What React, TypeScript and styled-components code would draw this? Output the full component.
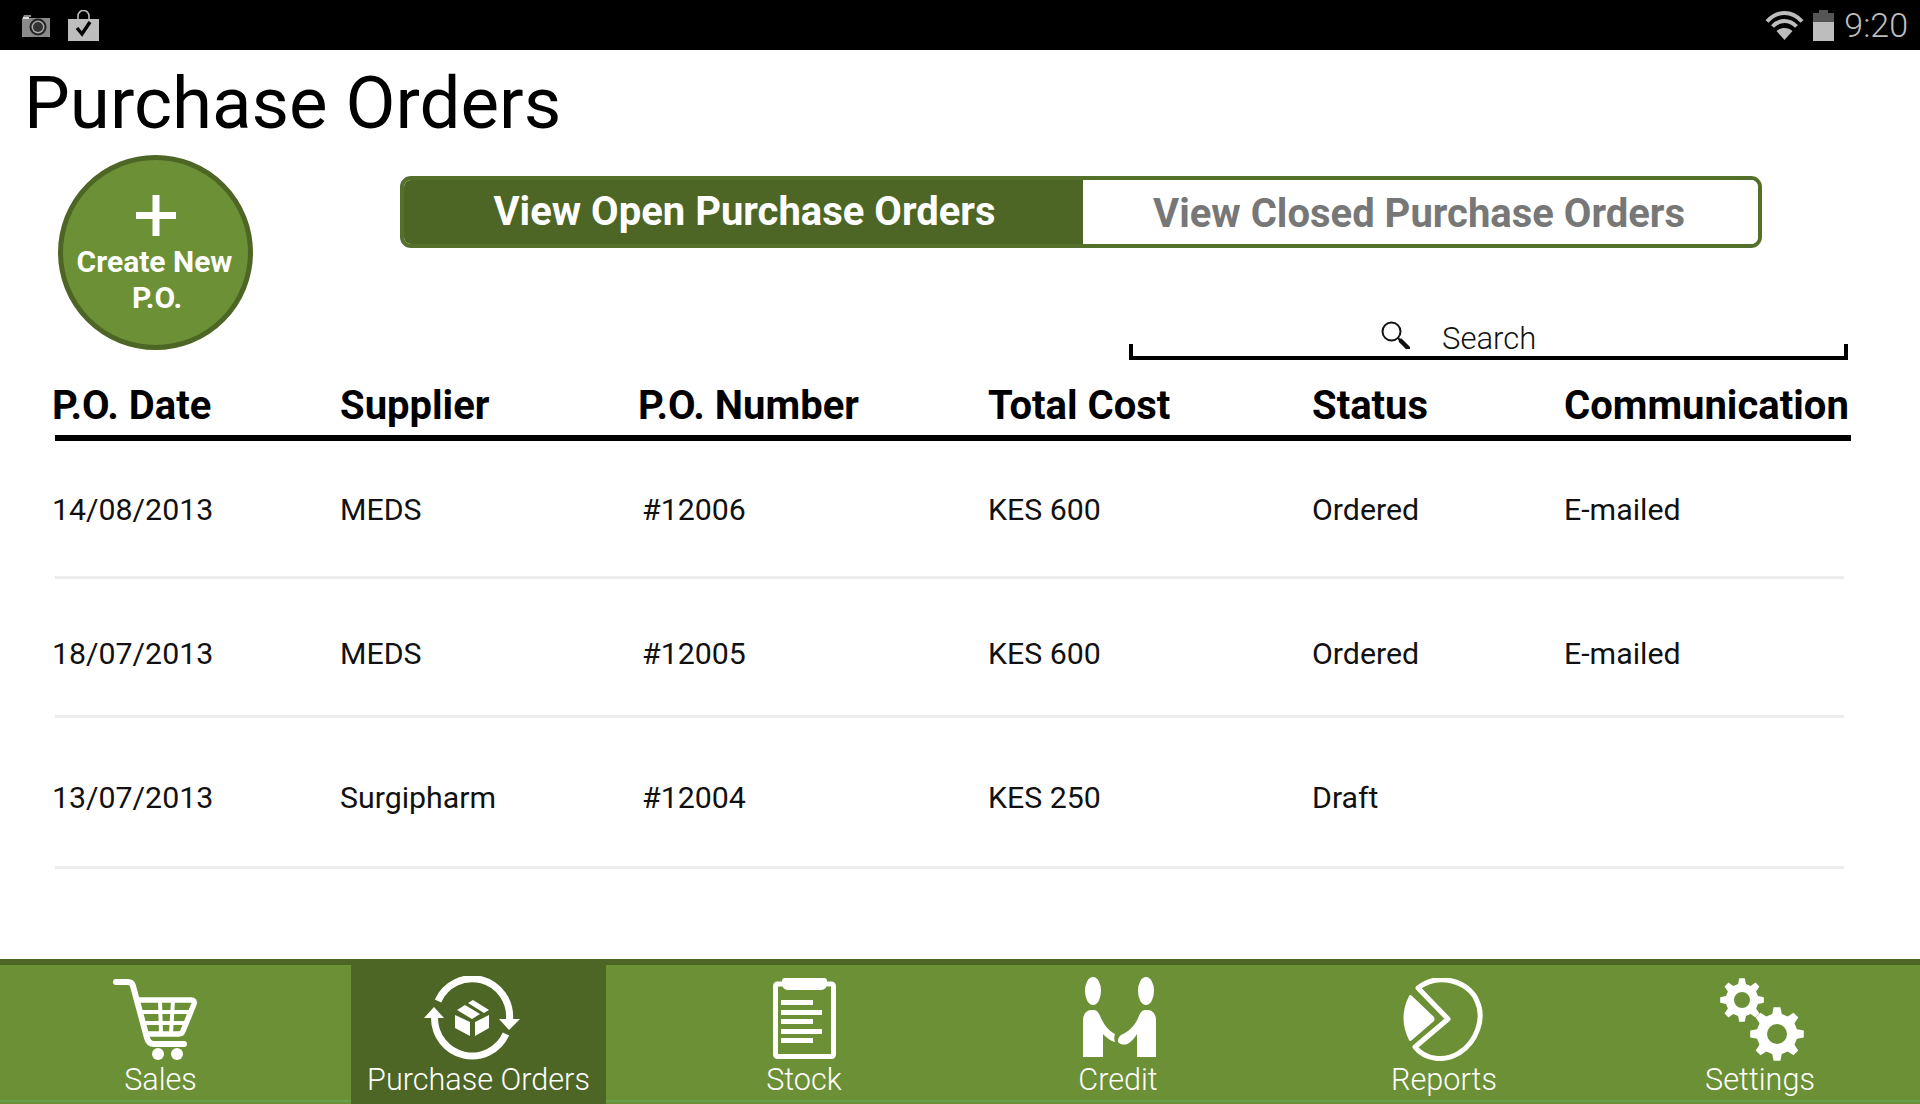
import React from 'react'
import styled, { createGlobalStyle } from 'styled-components'

const GREEN = '#6c9035'
const DARK_GREEN = '#4d6625'

const GlobalStyle = createGlobalStyle`
  html, body {
    margin: 0;
    padding: 0;
    background: #fff;
    font-family: Roboto, 'Liberation Sans', sans-serif;
  }
  * {
    box-sizing: border-box;
  }
`

const Page = styled.div`
  display: flex;
  flex-direction: column;
  width: 1920px;
  height: 1104px;
  overflow: hidden;
  background: #fff;
`

// Android status bar
const StatusBar = styled.div`
  display: flex;
  align-items: center;
  justify-content: space-between;
  flex: none;
  height: 50px;
  padding: 0 12px 0 21px;
  background: #000;
`

const StatusGroup = styled.div`
  display: flex;
  align-items: center;
  gap: ${props => props.$gap}px;
`

const Clock = styled.span`
  color: #bdbdbd;
  font-size: 34px;
  font-weight: 300;
  line-height: 34px;
  margin-left: 1px;
`

const Main = styled.main`
  flex: 1;
  min-height: 0;
`

const Title = styled.h1`
  height: 105px;
  margin: 0;
  padding-left: 24px;
  color: #000;
  font-size: 72.700px;
  font-weight: 400;
  line-height: 107px;
`

const Toolbar = styled.div`
  display: flex;
  height: 205px;
  padding: 0 72px 0 58px;
`

// Round "Create New P.O." button
const CreateButton = styled.button`
  display: flex;
  flex-direction: column;
  align-items: center;
  flex: none;
  width: 195px;
  height: 195px;
  padding: 35px 2px 0 0;
  border: 5px solid ${DARK_GREEN};
  border-radius: 50%;
  background: ${GREEN};
  color: #fff;
  font-family: inherit;
  font-size: 30px;
  font-weight: 700;
  line-height: 36px;
`

const Plus = styled.svg`
  display: block;
  margin: 0 0 8px 2px;
`

const CreateSubLabel = styled.span`
  margin-left: 5px;
`

const ToolbarRight = styled.div`
  display: flex;
  flex-direction: column;
  justify-content: space-between;
  flex: 1;
  margin-left: 147px;
  padding-top: 21px;
`

const Tabs = styled.div`
  display: flex;
  width: 1362px;
  height: 72px;
  border: 4px solid #54702a;
  border-radius: 11px;
  overflow: hidden;
`

const Tab = styled.div`
  display: flex;
  align-items: center;
  justify-content: center;
  width: ${props => (props.$active ? 679 : 675)}px;
  padding: ${props => (props.$active ? '0 0 2px 2px' : '2px 3px 0 0')};
  background: ${props => (props.$active ? DARK_GREEN : '#fff')};
  color: ${props => (props.$active ? '#fff' : '#777')};
  font-size: 40px;
  font-weight: 700;
`

const SearchBar = styled.div`
  position: relative;
  display: flex;
  align-items: flex-start;
  gap: 32px;
  width: 719px;
  height: 39px;
  margin-left: 729px;
  padding-left: 252px;
  border-bottom: 4px solid #000;
  color: #111;
  font-size: 31px;
  font-weight: 300;
  line-height: 30px;

  &::before,
  &::after {
    content: '';
    position: absolute;
    bottom: 0;
    width: 4px;
    height: 12px;
    background: #000;
  }
  &::before {
    left: 0;
  }
  &::after {
    right: 0;
  }
`

const SearchLabel = styled.span`
  margin-top: 3px;
`

const Table = styled.div`
  padding: 0 69px 0 55px;
`

const gridColumns = '288px 298px 350px 324px 252px 1fr'

const HeadRow = styled.div`
  display: grid;
  grid-template-columns: ${gridColumns};
  height: 81px;
  padding-top: 27px;
  border-bottom: 6px solid #000;
  color: #000;
  font-size: 40px;
  font-weight: 700;
  line-height: 38px;
`

const Row = styled.div`
  display: grid;
  grid-template-columns: ${gridColumns};
  align-items: start;
  height: ${props => props.$height}px;
  margin-right: 7px;
  padding-top: ${props => props.$pad}px;
  border-bottom: 3px solid #ececec;
  color: #111;
  font-size: 30.300px;
  font-weight: 400;
  line-height: 30px;
`

const Cell = styled.div`
  margin-left: -3px;
  white-space: nowrap;
`

const NumberCell = styled(Cell)`
  padding-left: 4px;
`

// Bottom navigation
const Nav = styled.nav`
  display: grid;
  grid-template-columns: 351px 255px 396px 232px 420px 266px;
  flex: none;
  height: 145px;
  background: ${DARK_GREEN};
`

const NavItem = styled.div`
  display: flex;
  flex-direction: column;
  align-items: center;
  height: ${props => (props.$active ? 145 : 139)}px;
  margin-top: ${props => (props.$active ? 0 : 6)}px;
  padding: ${props => (props.$active ? 17 : 11)}px ${props => props.$right}px 0 0;
  background: ${props => (props.$active ? DARK_GREEN : GREEN)};
  box-shadow: ${props => (props.$active ? 'none' : `inset 0 -2px ${GREEN}, inset 0 -4px #66a04a`)};
  color: #fff;
  font-size: 30.600px;
  font-weight: 300;
`

const IconSlot = styled.div`
  flex: none;
  height: 84px;
`

const NavIcon = styled.svg`
  display: block;
  margin-top: ${props => props.$top || 0}px;
  margin-left: ${props => props.$shift || 0}px;
`

const NavLabel = styled.span`
  line-height: 30px;
  margin-top: 5px;
  white-space: nowrap;
`

const CameraIcon = () => (
  <svg width='30' height='23' viewBox='0 0 30 23'>
    <path d='M2 3h8V1h-7zM1 4h28v19H1z' fill='#8a8a8a' />
    <rect x='2' y='3' width='6' height='2' fill='#ddd' />
    <circle cx='17' cy='13' r='8.5' fill='#222' />
    <circle cx='17' cy='13' r='6.5' fill='#aaa' />
    <circle cx='17' cy='13' r='5' fill='#333' />
  </svg>
)

const BagIcon = () => (
  <svg width='31' height='31' viewBox='0 0 31 31'>
    <path d='M10 9V6a5.5 5.5 0 0 1 11 0v3' fill='none' stroke='#bbb' strokeWidth='1.6' />
    <path d='M0 9h31v22H0z' fill='#bdbdbd' />
    <path d='M9 18l5 6 8-12' fill='none' stroke='#000' strokeWidth='3.4' />
  </svg>
)

const WifiIcon = () => (
  <svg width='39' height='29' viewBox='0 0 39 29'>
    <g fill='none' stroke='#bdbdbd' strokeWidth='4'>
      <path d='M2 10.5C12-.8 27-.8 37 10.5' />
      <path d='M7.500 15.500c7-7.500 17-7.500 24 0' />
    </g>
    <path d='M19.500 29L11.500 20c4.500-4 11.500-4 16 0z' fill='#bdbdbd' />
  </svg>
)

const BatteryIcon = () => (
  <svg width='21' height='31' viewBox='0 0 21 31'>
    <path d='M6 0h9v3h6v9H0V3h6z' fill='#555' />
    <path d='M0 12h21v19H0z' fill='#bdbdbd' />
  </svg>
)

const SearchIcon = () => (
  <svg width='29' height='28' viewBox='0 0 29 28'>
    <circle cx='10.500' cy='10.500' r='9' fill='none' stroke='#111' strokeWidth='2' />
    <path d='M17 17l10 10' stroke='#111' strokeWidth='2' />
    <path d='M20 20l7 7' stroke='#111' strokeWidth='4.500' strokeLinecap='round' />
  </svg>
)

const CartGlyph = () => (
  <NavIcon width='84' height='82' viewBox='0 0 84 82' $top={2} $shift={-11}>
    <g fill='none' stroke='#fff' strokeLinecap='round' strokeLinejoin='round'>
      <path d='M3 4H15Q19 4 20 8L34 60Q35.500 66 41 66H71' strokeWidth='6' />
      <path d='M24 22H78Q82 22 81 26L70 53Q69 56 66 56H36' strokeWidth='5.500' />
      <path d='M28 34H76M31 45H72M47 23L48 55M60 23L58 55' strokeWidth='4' strokeLinecap='butt' />
    </g>
    <circle cx='45' cy='76' r='6' fill='#fff' />
    <circle cx='64' cy='76' r='6' fill='#fff' />
  </NavIcon>
)

const CycleGlyph = () => (
  <NavIcon width='96' height='84' viewBox='0 0 96 84' $shift={-14}>
    <g fill='none' stroke='#fff' strokeWidth='7'>
      <path d='M14 25A37.500 38 0 0 1 85.500 44' />
      <path d='M82 58A37.500 38 0 0 1 10.500 42' />
    </g>
    <g fill='#fff'>
      <path d='M75 43H96L85 54zM0 42H20L10 31z' />
      <path d='M31 39L46 46V60L31 52zM51 46L65 39V52L51 60z' />
      <path d='M33 34L41 29L56 38L48 43zM44 27L49 24L65 34L60 37z' />
    </g>
  </NavIcon>
)

const ClipboardGlyph = () => (
  <NavIcon width='63' height='82' viewBox='0 0 63 82' $top={1}>
    <rect x='2.500' y='7' width='58' height='72.500' rx='2' fill='none' stroke='#fff' strokeWidth='5' />
    <path d='M12 1H51Q54 1 54 4V6Q54 13 48 13H15Q9 13 9 6V4Q9 1 12 1z' fill='#fff' />
    <path d='M8 23h32v5H8zM8 33h41v5H8zM8 42h32v5H8zM8 52h41v5H8zM8 61h32v5H8z' fill='#fff' />
  </NavIcon>
)

const HandshakeGlyph = () => (
  <NavIcon width='73' height='80' viewBox='0 0 73 80' $top={1} $shift={2}>
    <g fill='#fff'>
      <ellipse cx='10' cy='14' rx='8' ry='14' />
      <ellipse cx='63' cy='14' rx='8' ry='14' />
      <path d='M0 80V43C0 37 4 33 8 33H11C14 33 16 36 18 41C21 48 26 54 32 57C31 60 31 62 32 65C27 64 23 60 20 57V80z' />
      <path d='M73 80V43C73 37 69 33 65 33H62C59 33 57 36 55 41C52 49 45 55 38 58C35 60 34 65 36 66C39 68 43 68 46 66C49 64 52 60 54 57V80z' />
    </g>
  </NavIcon>
)

const PieGlyph = () => (
  <NavIcon width='82' height='83' viewBox='0 0 82 83' $top={2} $shift={-4}>
    <path
      d='M17 10L47 41L14 69C24 82 44 84 58 75C76 64 84 40 76 23C68 3 37-6 17 10z'
      fill='none'
      stroke='#fff'
      strokeWidth='5'
      strokeLinejoin='round'
    />
    <path d='M8 18Q9 16 11 18L33 39Q34 41 33 43L11 62Q9 64 8 62Q-3 40 8 18z' fill='#fff' />
  </NavIcon>
)

// Builds a toothed wheel with a round hole
const gearPath = (cx: number, cy: number, outer: number, inner: number, hole: number) => {
  const teeth = 8
  const points: string[] = []
  for (let i = 0; i < teeth; i++) {
    const step = (Math.PI * 2) / teeth
    const a = i * step
    const corners: [number, number][] = [
      [a - step * 0.3, inner],
      [a - step * 0.16, outer],
      [a + step * 0.16, outer],
      [a + step * 0.3, inner],
    ]
    corners.forEach(([angle, r]) => {
      points.push(`${(cx + Math.cos(angle) * r).toFixed(1)} ${(cy + Math.sin(angle) * r).toFixed(1)}`)
    })
  }
  return `M${points.join('L')}zM${cx - hole} ${cy}a${hole} ${hole} 0 1 0 ${hole * 2} 0a${hole} ${hole} 0 1 0 ${-hole * 2} 0z`
}

const GearsGlyph = () => (
  <NavIcon width='84' height='83' viewBox='0 0 84 83' $top={2} $shift={4}>
    <path d={gearPath(22, 22, 22, 16.500, 8)} fill='#fff' fillRule='evenodd' />
    <path d={gearPath(57, 56, 27, 20.500, 10)} fill='#fff' fillRule='evenodd' />
  </NavIcon>
)

const columns = ['P.O. Date', 'Supplier', 'P.O. Number', 'Total Cost', 'Status', 'Communication']

const orders = [
  { date: '14/08/2013', supplier: 'MEDS', number: '#12006', cost: 'KES 600', status: 'Ordered', comm: 'E-mailed', height: 138, pad: 54 },
  { date: '18/07/2013', supplier: 'MEDS', number: '#12005', cost: 'KES 600', status: 'Ordered', comm: 'E-mailed', height: 139, pad: 60 },
  { date: '13/07/2013', supplier: 'Surgipharm', number: '#12004', cost: 'KES 250', status: 'Draft', comm: '', height: 151, pad: 65 },
]

const navItems = [
  { label: 'Sales', Glyph: CartGlyph, right: 30 },
  { label: 'Purchase Orders', Glyph: CycleGlyph, right: 0, active: true },
  { label: 'Stock', Glyph: ClipboardGlyph, right: 0 },
  { label: 'Credit', Glyph: HandshakeGlyph, right: 0 },
  { label: 'Reports', Glyph: PieGlyph, right: 0 },
  { label: 'Settings', Glyph: GearsGlyph, right: 54 },
]

export default function App() {
  return (
    <Page>
      <GlobalStyle />
      <StatusBar>
        <StatusGroup $gap={17}>
          <CameraIcon />
          <BagIcon />
        </StatusGroup>
        <StatusGroup $gap={9}>
          <WifiIcon />
          <BatteryIcon />
          <Clock>9:20</Clock>
        </StatusGroup>
      </StatusBar>
      <Main>
        <Title>Purchase Orders</Title>
        <Toolbar>
          <CreateButton>
            <Plus width='40' height='41' viewBox='0 0 40 41'>
              <path d='M16.500 0h7v17h16.500v7H23.500v17h-7V24H0v-7h16.500z' fill='#fff' />
            </Plus>
            Create New
            <CreateSubLabel>P.O.</CreateSubLabel>
          </CreateButton>
          <ToolbarRight>
            <Tabs>
              <Tab $active>View Open Purchase Orders</Tab>
              <Tab>View Closed Purchase Orders</Tab>
            </Tabs>
            <SearchBar>
              <SearchIcon />
              <SearchLabel>Search</SearchLabel>
            </SearchBar>
          </ToolbarRight>
        </Toolbar>
        <Table>
          <HeadRow>
            {columns.map(c => (
              <Cell key={c}>{c}</Cell>
            ))}
          </HeadRow>
          {orders.map(o => (
            <Row key={o.number} $height={o.height} $pad={o.pad}>
              <Cell>{o.date}</Cell>
              <Cell>{o.supplier}</Cell>
              <NumberCell>{o.number}</NumberCell>
              <Cell>{o.cost}</Cell>
              <Cell>{o.status}</Cell>
              <Cell>{o.comm}</Cell>
            </Row>
          ))}
        </Table>
      </Main>
      <Nav>
        {navItems.map(({ label, Glyph, right, active }) => (
          <NavItem key={label} $active={active} $right={right}>
            <IconSlot>
              <Glyph />
            </IconSlot>
            <NavLabel>{label}</NavLabel>
          </NavItem>
        ))}
      </Nav>
    </Page>
  )
}
